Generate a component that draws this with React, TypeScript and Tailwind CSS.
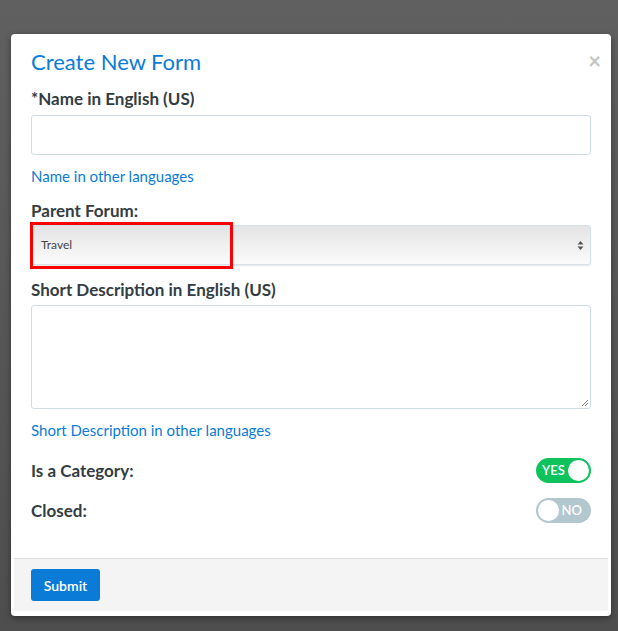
import React from "react";

function Toggle({ on }: { on: boolean }) {
  return on ? (
    <div className="flex h-[25px] w-[55px] items-center justify-between rounded-full bg-[#0ec25c] pl-[6px] pr-[2px]">
      <span className="text-[13px] font-semibold text-white">YES</span>
      <span className="h-[21px] w-[21px] rounded-full bg-white" />
    </div>
  ) : (
    <div className="flex h-[25px] w-[55px] items-center justify-between rounded-full bg-[#b3c7ce] pl-[2px] pr-[9px]">
      <span className="h-[21px] w-[21px] rounded-full bg-white" />
      <span className="text-[13px] font-semibold text-white">NO</span>
    </div>
  );
}

export default function App() {
  return (
    <div
      className="flex h-[631px] w-[618px] flex-col bg-gradient-to-b from-[#606060] to-[#4e4e4e] pt-[34px]"
      style={{ fontFamily: "Lato, 'Noto Sans', sans-serif" }}
    >
      <div className="ml-[11px] w-[600px] rounded-[4px] bg-white pb-[5px] shadow-[0_2px_6px_rgba(0,0,0,0.4)]">
        <div className="px-[20px] pt-[13px]">
          <div className="flex items-start justify-between">
            <h1 className="text-[22px] leading-[30px] text-[#0a7cd8]">Create New Form</h1>
            <span className="mr-[-10px] mt-[4px] text-[22px] font-bold leading-[20px] text-[#c4c4c4]">×</span>
          </div>
          <div className="mt-[12px] text-[17px] font-bold leading-[20px] text-[#333d43]">*Name in English (US)</div>
          <div className="mt-[6px] h-[40px] rounded-[3px] border border-[#cfdde4] bg-white" />
          <div className="mt-[11px] text-[15px] leading-[20px] text-[#0a7cd8]">Name in other languages</div>
          <div className="mt-[15px] text-[17px] font-bold leading-[20px] text-[#333d43]">Parent Forum:</div>
          <div className="relative mt-[4px] flex h-[40px] items-center rounded-[3px] border border-[#d5e2e8] bg-gradient-to-b from-[#e4e4e4] to-[#fbfbfb] pl-[9px] pr-[6px] shadow-[0_1px_2px_rgba(0,0,0,0.1)]">
            <span className="flex-1 text-[12px] text-[#444]">Travel</span>
            <svg width="7" height="11" viewBox="0 0 7 11">
              <path d="M3.5 1 L6.5 4.5 H0.5 Z" fill="#555" />
              <path d="M3.5 10 L6.5 6.5 H0.5 Z" fill="#555" />
            </svg>
            <div className="absolute left-[-2px] top-[-4px] h-[47px] w-[203px] border-[3px] border-[#ff0000]" />
          </div>
          <div className="mt-[15px] text-[17px] font-bold leading-[20px] text-[#333d43]">Short Description in English (US)</div>
          <div className="relative mt-[5px] h-[104px] rounded-[3px] border border-[#cfdde4] bg-white">
            <svg width="8" height="8" viewBox="0 0 8 8" className="absolute bottom-[1px] right-[1px]">
              <path d="M7 1 L1 7 M7 4 L4 7" stroke="#888" strokeWidth="1" />
            </svg>
          </div>
          <div className="mt-[11px] text-[15px] leading-[20px] text-[#0a7cd8]">Short Description in other languages</div>
          <div className="mt-[18px] flex items-center justify-between">
            <span className="text-[17px] font-bold text-[#333d43]">Is a Category:</span>
            <Toggle on />
          </div>
          <div className="mt-[14px] flex items-center justify-between">
            <span className="text-[17px] font-bold text-[#333d43]">Closed:</span>
            <Toggle on={false} />
          </div>
        </div>
        <div className="mx-[3px] mt-[35px] border-t border-[#dedede] bg-[#f4f4f4] px-[17px] pb-[10px] pt-[10px]">
          <button className="h-[32px] w-[69px] rounded-[3px] bg-[#0a7cd8] text-[14px] font-semibold text-white">Submit</button>
        </div>
      </div>
    </div>
  );
}
